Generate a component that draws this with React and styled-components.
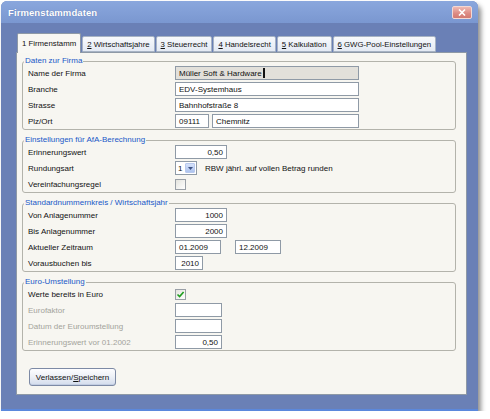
import React from 'react';
import styled, { createGlobalStyle } from 'styled-components';

const Global = createGlobalStyle`
  html, body { margin: 0; padding: 0; background: #ffffff; }
  body { font-family: "Liberation Sans", Arial, sans-serif; }
  * { box-sizing: border-box; }
`;

const FONT = '8px';
const TABFONT = '7.8px';

const Window = styled.div`
  margin: 1px 0 0 1px;
  width: 477px;
  height: 410px;
  background: #6a80b6;
  border-radius: 6px 6px 0 0;
  box-shadow: 3px 4px 5px rgba(0, 0, 0, 0.45), inset 0 -2px 0 #5b88dc;
  display: flex;
  flex-direction: column;
`;

const TitleBar = styled.div`
  height: 22px;
  flex: none;
  display: flex;
  align-items: center;
  justify-content: space-between;
  padding: 0 6px 0 7px;
  background: linear-gradient(#8aa7dd, #7a97d0);
  border-radius: 6px 6px 0 0;
`;

const Title = styled.span`
  color: #ffffff;
  font-weight: bold;
  font-size: 9.5px;
  letter-spacing: 0.1px;
  text-shadow: 0 0 1px rgba(40, 60, 120, 0.45);
`;

const CloseButton = styled.div`
  width: 20px;
  height: 13px;
  border: 1px solid #f3d8d4;
  border-radius: 2px;
  background: linear-gradient(#efb9b2, #dc8a83 60%, #d27a72);
  display: flex;
  align-items: center;
  justify-content: center;
`;

const Body = styled.div`
  flex: 1;
  display: flex;
  flex-direction: column;
  padding: 10px 11px 18px 15px;
  min-height: 0;
`;

const TabStrip = styled.div`
  height: 20px;
  flex: none;
  display: flex;
  align-items: flex-end;
  padding-left: 1px;
  margin-bottom: -1px;
  position: relative;
  z-index: 1;
`;

const Tab = styled.div`
  height: ${p => (p.$active ? '20px' : '16px')};
  margin-bottom: ${p => (p.$active ? '0' : '1px')};
  margin-right: 1px;
  padding: 0 4px;
  display: flex;
  align-items: center;
  font-size: ${TABFONT};
  color: #111;
  white-space: nowrap;
  border: 1px solid ${p => (p.$active ? '#8e99a6' : '#a7b3c4')};
  border-bottom: ${p => (p.$active ? 'none' : '1px solid #a7b3c4')};
  border-radius: 2px 2px 0 0;
  background: ${p => (p.$active ? '#f8f7f3' : 'linear-gradient(#f7f9fc, #e4eaf4)')};
`;

const Panel = styled.div`
  flex: 1;
  display: flex;
  flex-direction: column;
  gap: 5px;
  background: #f7f6f1;
  border: 1px solid #8e99a6;
  padding: 3px 10px 8px 5px;
`;

const Group = styled.fieldset`
  margin: 0;
  padding: 0 0 1px 1px;
  border: 1px solid #b3b3ab;
  border-radius: 3px;
  min-width: 0;
`;

const Legend = styled.legend`
  padding: 0 1px;
  font-size: ${FONT};
  line-height: 10px;
  color: #2058c8;
`;

const Rows = styled.div`
  display: flex;
  flex-direction: column;
  gap: 2px;
  padding-left: 4px;
`;

const Row = styled.div`
  height: 14px;
  display: flex;
  align-items: center;
`;

const Label = styled.span`
  width: 147px;
  flex: none;
  font-size: ${FONT};
  color: ${p => (p.$disabled ? '#a3a39b' : '#111')};
`;

const Field = styled.div`
  width: ${p => p.$w}px;
  height: 14px;
  flex: none;
  border: 1px solid #8f9aa6;
  background: ${p => (p.$selected ? '#e2e0da' : '#ffffff')};
  padding: 0 3px;
  display: flex;
  align-items: center;
  justify-content: ${p => (p.$right ? 'flex-end' : 'flex-start')};
  font-size: ${FONT};
  color: #111;
  white-space: nowrap;
  overflow: hidden;
  margin-right: ${p => p.$mr || 0}px;
`;

const Caret = styled.span`
  width: 2px;
  height: 10px;
  background: #111;
  margin-left: 1px;
`;

const Combo = styled.div`
  width: 22px;
  height: 14px;
  flex: none;
  border: 1px solid #8f9aa6;
  background: #ffffff;
  display: flex;
  align-items: center;
  padding: 0 1px 0 2px;
  font-size: ${FONT};
  color: #111;
`;

const DropButton = styled.div`
  margin-left: auto;
  width: 10px;
  height: 10px;
  border: 1px solid #b8c9ee;
  border-radius: 1px;
  background: linear-gradient(#d6e2fa, #aec4ee);
  display: flex;
  align-items: center;
  justify-content: center;
`;

const Note = styled.span`
  margin-left: 8px;
  font-size: ${FONT};
  color: #111;
  white-space: nowrap;
`;

const Check = styled.div`
  width: 11px;
  height: 11px;
  flex: none;
  border: 1px solid #9aa0a7;
  background: linear-gradient(135deg, #e4e4de, #ffffff);
  display: flex;
  align-items: center;
  justify-content: center;
`;

const Button = styled.div`
  align-self: flex-start;
  margin: 12px 0 0 7px;
  width: 87px;
  height: 18px;
  border: 1px solid #7d8aa5;
  border-radius: 3px;
  background: linear-gradient(#fdfdff, #eef1f7 45%, #d3dcec);
  box-shadow: inset 0 -1px 0 #c2cde2;
  display: flex;
  align-items: center;
  justify-content: center;
  font-size: ${FONT};
  color: #111;
`;

const Tabs = () => (
  <TabStrip>
    <Tab $active>1 Firmenstamm</Tab>
    <Tab><u>2</u>&nbsp;Wirtschaftsjahre</Tab>
    <Tab><u>3</u>&nbsp;Steuerrecht</Tab>
    <Tab><u>4</u>&nbsp;Handelsrecht</Tab>
    <Tab><u>5</u>&nbsp;Kalkulation</Tab>
    <Tab><u>6</u>&nbsp;GWG-Pool-Einstellungen</Tab>
  </TabStrip>
);

const CheckMark = () => (
  <svg width="9" height="9" viewBox="0 0 9 9">
    <path d="M1.5 4.5 L3.6 6.6 L7.6 2" fill="none" stroke="#1f9e1f" strokeWidth="1.6" />
  </svg>
);

export default function App() {
  return (
    <>
      <Global />
      <Window>
        <TitleBar>
          <Title>Firmenstammdaten</Title>
          <CloseButton>
            <svg width="8" height="7" viewBox="0 0 8 7">
              <path d="M1 0.5 L7 6.5 M7 0.5 L1 6.5" stroke="#ffffff" strokeWidth="1.6" />
            </svg>
          </CloseButton>
        </TitleBar>
        <Body>
          <Tabs />
          <Panel>
            <Group>
              <Legend>Daten zur Firma</Legend>
              <Rows>
                <Row>
                  <Label>Name der Firma</Label>
                  <Field $w={184} $selected>Müller Soft &amp; Hardware<Caret /></Field>
                </Row>
                <Row>
                  <Label>Branche</Label>
                  <Field $w={184}>EDV-Systemhaus</Field>
                </Row>
                <Row>
                  <Label>Strasse</Label>
                  <Field $w={184}>Bahnhofstraße 8</Field>
                </Row>
                <Row>
                  <Label>Plz/Ort</Label>
                  <Field $w={34} $mr={3}>09111</Field>
                  <Field $w={147}>Chemnitz</Field>
                </Row>
              </Rows>
            </Group>

            <Group>
              <Legend>Einstellungen für AfA-Berechnung</Legend>
              <Rows>
                <Row>
                  <Label>Erinnerungswert</Label>
                  <Field $w={52} $right>0,50</Field>
                </Row>
                <Row>
                  <Label>Rundungsart</Label>
                  <Combo>
                    1
                    <DropButton>
                      <svg width="5" height="3" viewBox="0 0 5 3">
                        <polygon points="0,0 5,0 2.5,3" fill="#3d5283" />
                      </svg>
                    </DropButton>
                  </Combo>
                  <Note>RBW jährl. auf vollen Betrag runden</Note>
                </Row>
                <Row>
                  <Label>Vereinfachungsregel</Label>
                  <Check />
                </Row>
              </Rows>
            </Group>

            <Group>
              <Legend>Standardnummernkreis / Wirtschaftsjahr</Legend>
              <Rows>
                <Row>
                  <Label>Von Anlagenummer</Label>
                  <Field $w={52} $right>1000</Field>
                </Row>
                <Row>
                  <Label>Bis Anlagenummer</Label>
                  <Field $w={52} $right>2000</Field>
                </Row>
                <Row>
                  <Label>Aktueller Zeitraum</Label>
                  <Field $w={46} $mr={14}>01.2009</Field>
                  <Field $w={46}>12.2009</Field>
                </Row>
                <Row>
                  <Label>Vorausbuchen bis</Label>
                  <Field $w={28} $right>2010</Field>
                </Row>
              </Rows>
            </Group>

            <Group>
              <Legend>Euro-Umstellung</Legend>
              <Rows>
                <Row>
                  <Label>Werte bereits in Euro</Label>
                  <Check><CheckMark /></Check>
                </Row>
                <Row>
                  <Label $disabled>Eurofaktor</Label>
                  <Field $w={47} />
                </Row>
                <Row>
                  <Label $disabled>Datum der Euroumstellung</Label>
                  <Field $w={47} />
                </Row>
                <Row>
                  <Label $disabled>Erinnerungswert vor 01.2002</Label>
                  <Field $w={47} $right>0,50</Field>
                </Row>
              </Rows>
            </Group>

            <Button>Verlassen/<u>S</u>peichern</Button>
          </Panel>
        </Body>
      </Window>
    </>
  );
}
